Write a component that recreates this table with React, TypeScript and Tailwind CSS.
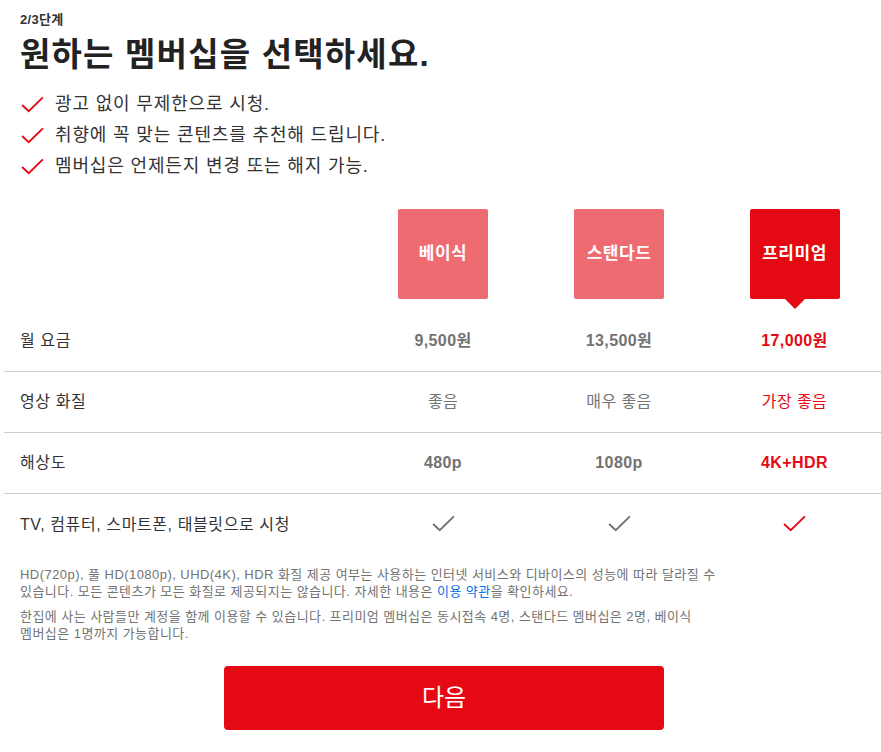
import React from 'react';

const font = { fontFamily: '"Liberation Sans", "Noto Sans CJK KR", sans-serif' };

function Check({ className }: { className?: string }) {
  return (
    <svg viewBox="0 0 24 18" className={className} fill="none" stroke="currentColor" strokeWidth={2}>
      <path d="M1 9.5 L8 16 L23 1.5" />
    </svg>
  );
}

const plans = [
  { name: '베이식', box: 'bg-[#ef6b72]', active: false },
  { name: '스탠다드', box: 'bg-[#ef6b72]', active: false },
  { name: '프리미엄', box: 'bg-[#e50914]', active: true },
];

const rows: { label: string; values: string[]; check?: boolean; bold?: boolean }[] = [
  { label: '월 요금', values: ['9,500원', '13,500원', '17,000원'], bold: true },
  { label: '영상 화질', values: ['좋음', '매우 좋음', '가장 좋음'] },
  { label: '해상도', values: ['480p', '1080p', '4K+HDR'], bold: true },
  { label: 'TV, 컴퓨터, 스마트폰, 태블릿으로 시청', values: ['', '', ''], check: true },
];

const benefits = [
  '광고 없이 무제한으로 시청.',
  '취향에 꼭 맞는 콘텐츠를 추천해 드립니다.',
  '멤버십은 언제든지 변경 또는 해지 가능.',
];

export default function App() {
  return (
    <div className="w-[881px] h-[752px] bg-white text-[#333] overflow-hidden" style={font}>
      {/* Step header */}
      <div className="px-5 pt-[12px]">
        <div className="text-[13px] font-bold leading-[15px] tracking-[0.3px]">2/3단계</div>
        <h1 className="mt-[8px] text-[33px] font-bold leading-[40px] tracking-[1.2px] text-[#222]">
          원하는 멤버십을 선택하세요.
        </h1>
        <ul className="mt-[18px] space-y-[8px]">
          {benefits.map((b) => (
            <li key={b} className="flex items-center gap-[11px] h-[23px]">
              <Check className="w-[23px] h-[17px] text-[#e50914] ml-[1px]" />
              <span className="text-[18px] leading-[23px] tracking-[0.85px]">{b}</span>
            </li>
          ))}
        </ul>
      </div>

      {/* Plan table */}
      <div className="ml-[4px] mt-[31px]">
        <div className="grid grid-cols-[351px_176px_176px_178px]">
          <div />
          {plans.map((p) => (
            <div key={p.name} className={`flex justify-center ${p.active ? 'pr-[3px]' : ''}`}>
              <div className="relative">
                <div
                  className={`w-[90px] h-[90px] rounded-[2px] flex items-center justify-center text-white text-[17px] font-bold tracking-[0.5px] ${p.box}`}
                >
                  {p.name}
                </div>
                {p.active && (
                  <div className="absolute left-1/2 -translate-x-1/2 top-[90px] w-0 h-0 border-l-[10px] border-r-[10px] border-t-[10px] border-l-transparent border-r-transparent border-t-[#e50914]" />
                )}
              </div>
            </div>
          ))}
        </div>

        <div className="mt-[12px]">
          {rows.map((r, i) => (
            <div
              key={r.label}
              className={`grid grid-cols-[351px_176px_176px_178px] items-center h-[61px] ${
                i < rows.length - 1 ? 'border-b border-[#cccccc]' : ''
              }`}
            >
              <div className="pl-4 text-[16px] tracking-[0.6px]">{r.label}</div>
              {r.values.map((v, j) => {
                const red = j === 2;
                return (
                  <div
                    key={j}
                    className={`flex justify-center text-[16px] tracking-[0.4px] ${r.bold ? 'font-bold' : ''} ${
                      red ? 'text-[#e50914] pr-[3px]' : 'text-[#737373]'
                    }`}
                  >
                    {r.check ? <Check className="w-[23px] h-[17px] -mt-[2px]" /> : v}
                  </div>
                );
              })}
            </div>
          ))}
        </div>
      </div>

      {/* Footnotes */}
      <div className="px-5 mt-[11px] max-w-[740px] text-[13px] leading-[17px] tracking-[0.45px] text-[#737373] break-keep">
        <p>
          HD(720p), 풀 HD(1080p), UHD(4K), HDR 화질 제공 여부는 사용하는 인터넷 서비스와 디바이스의 성능에 따라 달라질 수
          있습니다. 모든 콘텐츠가 모든 화질로 제공되지는 않습니다. 자세한 내용은{' '}
          <span className="text-[#0071eb]">이용 약관</span>을 확인하세요.
        </p>
        <p className="mt-[8px]">
          한집에 사는 사람들만 계정을 함께 이용할 수 있습니다. 프리미엄 멤버십은 동시접속 4명, 스탠다드 멤버십은 2명, 베이식
          멤버십은 1명까지 가능합니다.
        </p>
      </div>

      {/* Next button */}
      <div className="flex justify-center mt-[24px] pl-[7px]">
        <button className="w-[440px] h-[64px] rounded-[4px] bg-[#e50914] text-white text-[24px]">다음</button>
      </div>
    </div>
  );
}
